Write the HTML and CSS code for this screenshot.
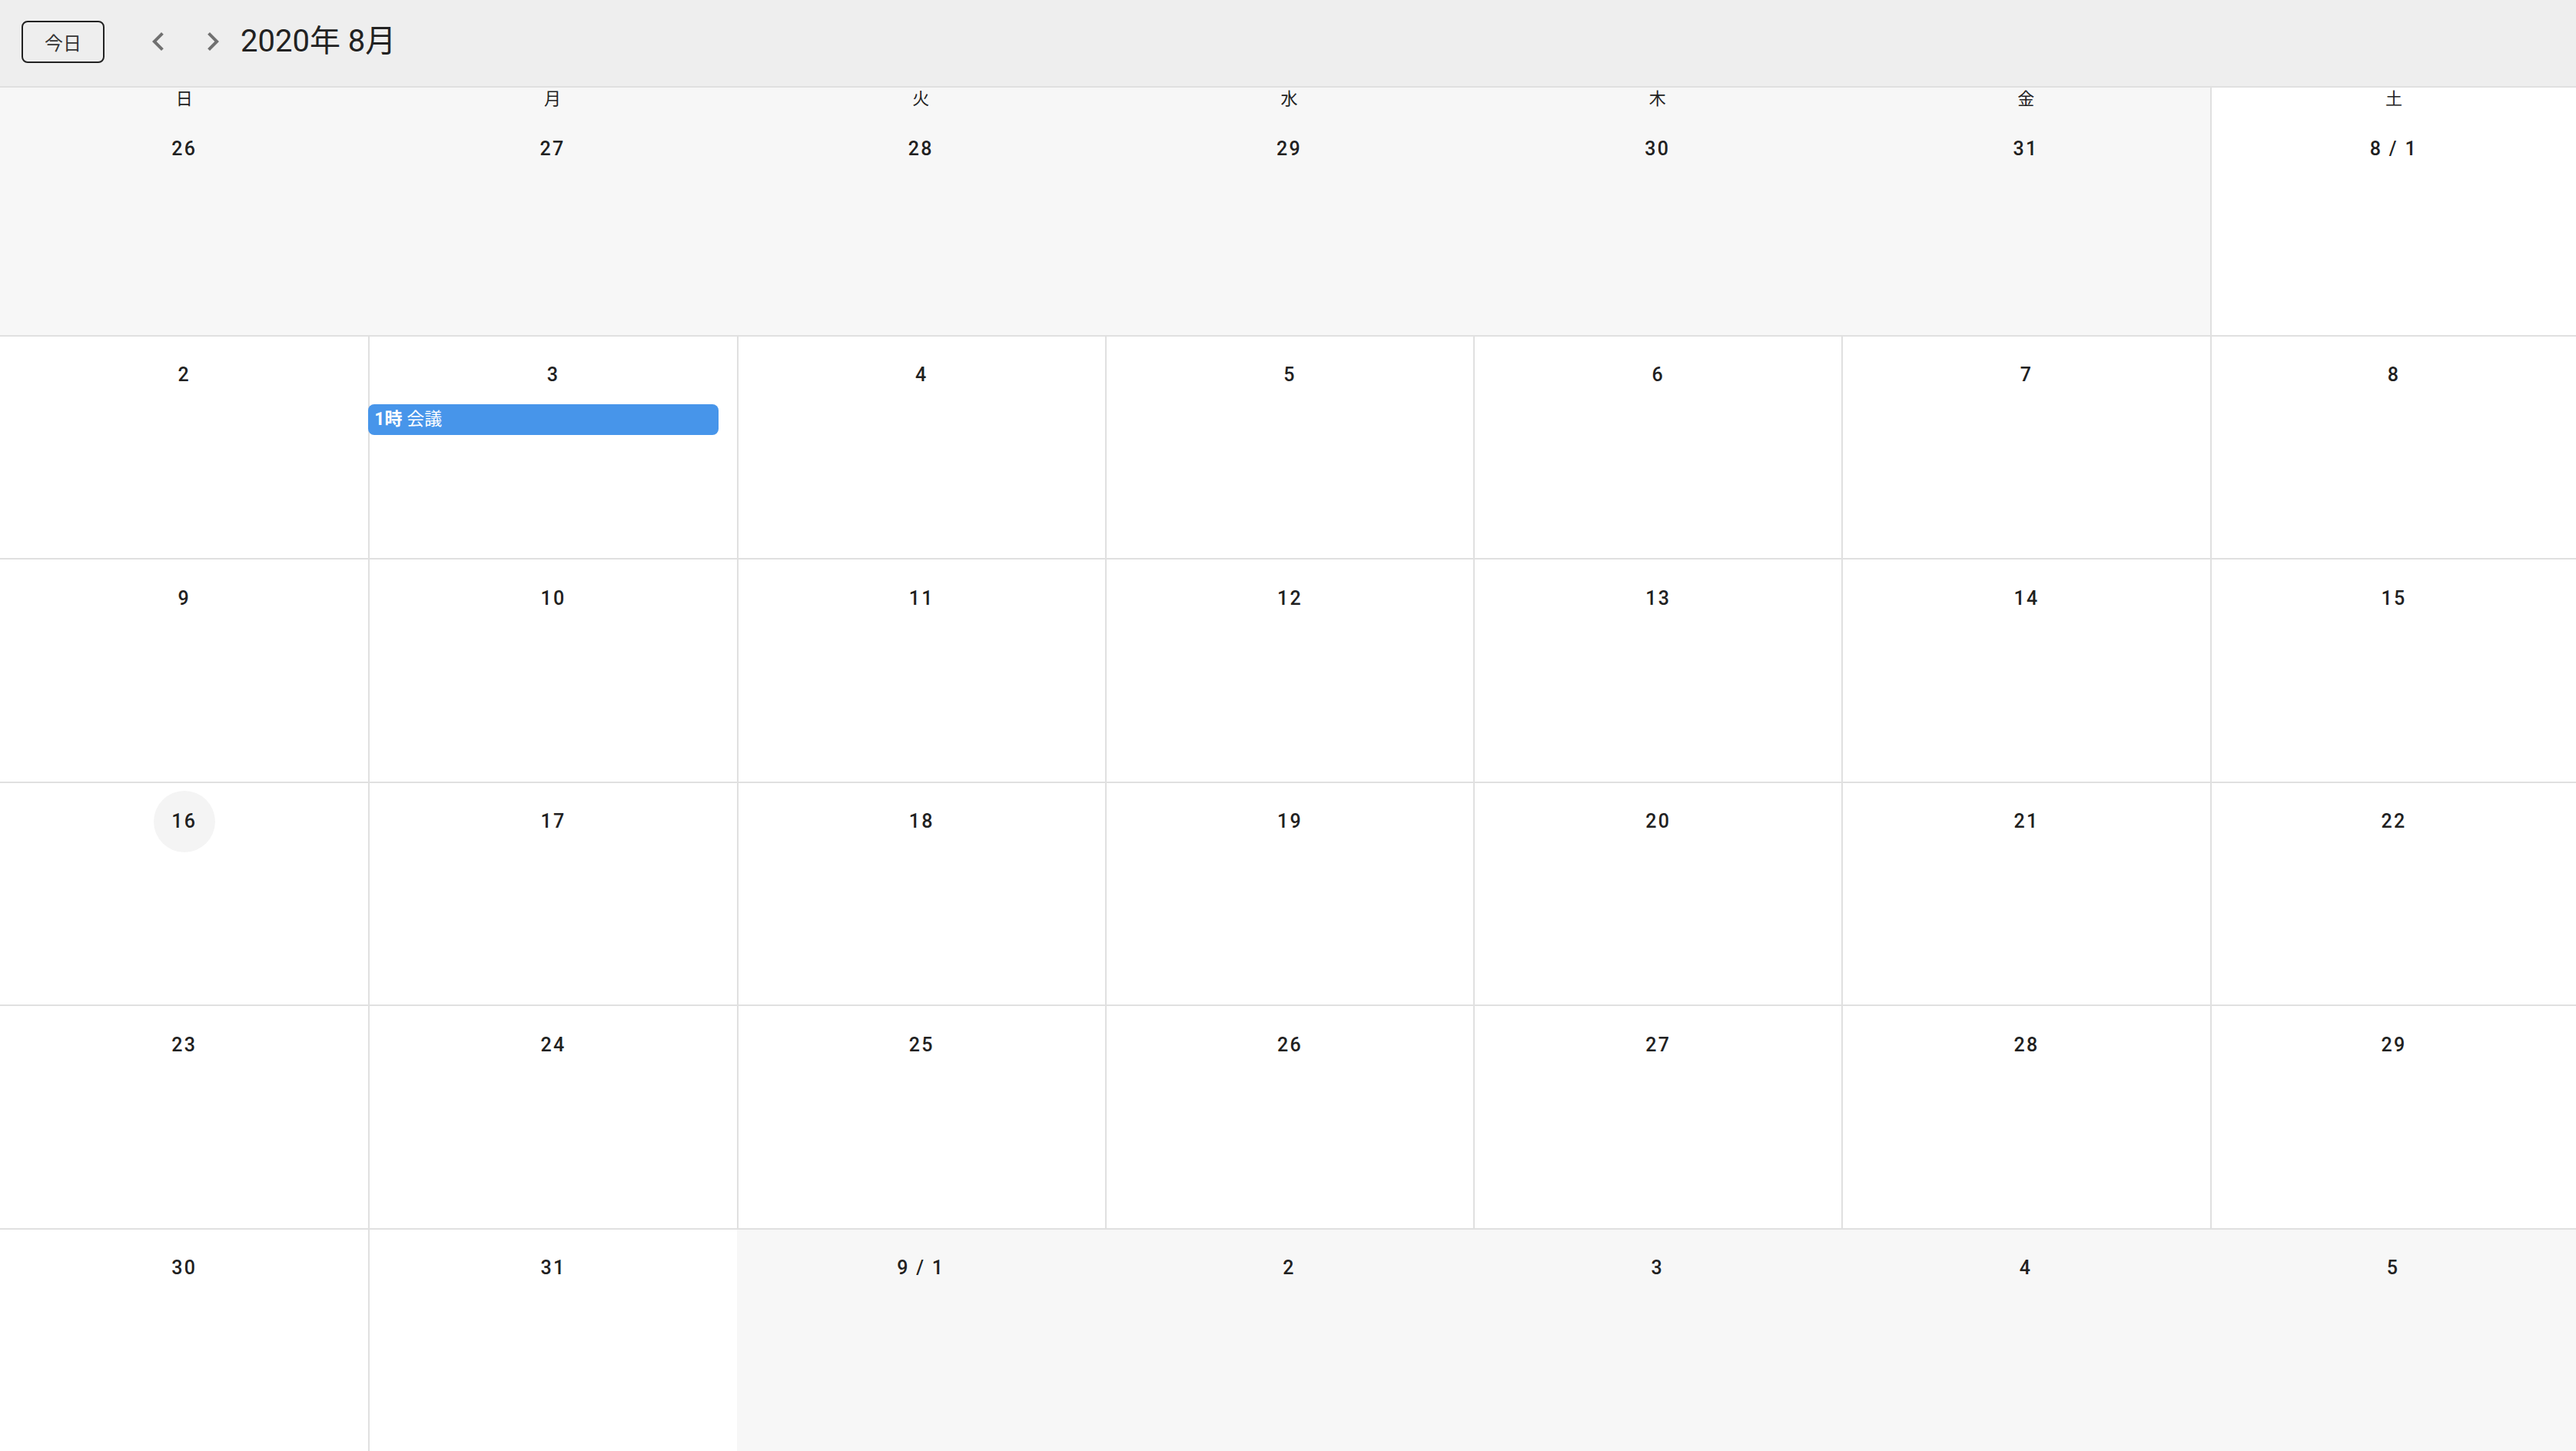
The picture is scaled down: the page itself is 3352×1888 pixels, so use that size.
FILE: index.html
```html
<!DOCTYPE html>
<html lang="ja">
<head>
<meta charset="utf-8">
<title>カレンダー</title>
<link rel="stylesheet" href="styles.css">
</head>
<body>
<div class="app">
  <header class="toolbar">
    <button class="today-btn">今日</button>
    <button class="icon-btn" aria-label="前へ">
      <svg viewBox="0 0 24 24" width="48" height="48"><path d="M15.41,16.58L10.83,12L15.41,7.41L14,6L8,12L14,18L15.41,16.58Z"/></svg>
    </button>
    <button class="icon-btn" aria-label="次へ">
      <svg viewBox="0 0 24 24" width="48" height="48"><path d="M8.59,16.58L13.17,12L8.59,7.41L10,6L16,12L10,18L8.59,16.58Z"/></svg>
    </button>
    <div class="title">2020年 8月</div>
  </header>

  <main class="month">
    <div class="week first">
      <div class="day out"><div class="wd">日</div><div class="num">26</div></div>
      <div class="day out"><div class="wd">月</div><div class="num">27</div></div>
      <div class="day out"><div class="wd">火</div><div class="num">28</div></div>
      <div class="day out"><div class="wd">水</div><div class="num">29</div></div>
      <div class="day out"><div class="wd">木</div><div class="num">30</div></div>
      <div class="day out"><div class="wd">金</div><div class="num">31</div></div>
      <div class="day in"><div class="wd">土</div><div class="num">8 / 1</div></div>
    </div>
    <div class="week">
      <div class="day in"><div class="num">2</div></div>
      <div class="day in"><div class="num">3</div><div class="event"><span class="ev-time">1時</span> 会議</div></div>
      <div class="day in"><div class="num">4</div></div>
      <div class="day in"><div class="num">5</div></div>
      <div class="day in"><div class="num">6</div></div>
      <div class="day in"><div class="num">7</div></div>
      <div class="day in"><div class="num">8</div></div>
    </div>
    <div class="week">
      <div class="day in"><div class="num">9</div></div>
      <div class="day in"><div class="num">10</div></div>
      <div class="day in"><div class="num">11</div></div>
      <div class="day in"><div class="num">12</div></div>
      <div class="day in"><div class="num">13</div></div>
      <div class="day in"><div class="num">14</div></div>
      <div class="day in"><div class="num">15</div></div>
    </div>
    <div class="week">
      <div class="day in"><div class="num today">16</div></div>
      <div class="day in"><div class="num">17</div></div>
      <div class="day in"><div class="num">18</div></div>
      <div class="day in"><div class="num">19</div></div>
      <div class="day in"><div class="num">20</div></div>
      <div class="day in"><div class="num">21</div></div>
      <div class="day in"><div class="num">22</div></div>
    </div>
    <div class="week">
      <div class="day in"><div class="num">23</div></div>
      <div class="day in"><div class="num">24</div></div>
      <div class="day in"><div class="num">25</div></div>
      <div class="day in"><div class="num">26</div></div>
      <div class="day in"><div class="num">27</div></div>
      <div class="day in"><div class="num">28</div></div>
      <div class="day in"><div class="num">29</div></div>
    </div>
    <div class="week">
      <div class="day in"><div class="num">30</div></div>
      <div class="day in"><div class="num">31</div></div>
      <div class="day out"><div class="num">9 / 1</div></div>
      <div class="day out"><div class="num">2</div></div>
      <div class="day out"><div class="num">3</div></div>
      <div class="day out"><div class="num">4</div></div>
      <div class="day out"><div class="num">5</div></div>
    </div>
  </main>
</div>
</body>
</html>
```

FILE: styles.css
```css
html, body {
  margin: 0;
  padding: 0;
  height: 100%;
  background: #ffffff;
  font-family: Roboto, "Noto Sans CJK JP", sans-serif;
  color: #212121;
}

.app {
  display: flex;
  flex-direction: column;
  height: 100vh;
  overflow: hidden;
}

.toolbar {
  flex: 0 0 auto;
  height: 108px;
  padding-bottom: 4px;
  background: #eeeeee;
  border-bottom: 2px solid #e0e0e0;
  display: flex;
  align-items: center;
  padding-left: 28px;
  box-sizing: content-box;
}

.today-btn {
  width: 108px;
  height: 55px;
  border: 2px solid #222222;
  border-radius: 8px;
  background: transparent;
  font-family: "Noto Sans CJK JP", sans-serif;
  font-size: 24px;
  color: #333333;
  padding: 0;
  display: flex;
  align-items: center;
  justify-content: center;
  box-sizing: border-box;
}

.icon-btn {
  width: 71px;
  height: 72px;
  margin: 0;
  padding: 0;
  border: 0;
  background: transparent;
  display: flex;
  align-items: center;
  justify-content: center;
  fill: #707070;
}

.today-btn + .icon-btn {
  margin-left: 34px;
}

.title {
  font-family: Roboto, "Noto Sans CJK JP", sans-serif;
  font-size: 40px;
  font-weight: 400;
  color: #222222;
  margin-left: 1px;
  line-height: 1;
}

.month {
  flex: 1 1 auto;
  display: flex;
  flex-direction: column;
  min-height: 0;
}

.week {
  flex: 1 0 0;
  display: grid;
  grid-template-columns: repeat(6, 479.3px) 1fr;
  min-height: 0;
}

.week.first {
  flex-basis: 33px;
}

.week + .week {
  border-top: 2px solid #e0e0e0;
}

.day {
  display: flex;
  flex-direction: column;
  align-items: center;
  min-width: 0;
  background: #ffffff;
}

.day.out {
  background: #f7f7f7;
}

.day.in:not(:first-child) {
  border-left: 2px solid #e0e0e0;
}

.wd {
  height: 29px;
  line-height: 24px;
  font-family: "Noto Sans CJK JP", sans-serif;
  font-size: 22px;
  color: #222222;
}

.num {
  width: 80px;
  height: 80px;
  margin-top: 10px;
  border-radius: 50%;
  display: flex;
  align-items: center;
  justify-content: center;
  font-family: Roboto, sans-serif;
  font-size: 25px;
  font-weight: 500;
  letter-spacing: 2.3px;
  white-space: nowrap;
  color: #212121;
}

.num.today {
  background: #f4f4f4;
}

.event {
  align-self: flex-start;
  margin-top: -2px;
  margin-left: -2px;
  width: calc(100% - 22px);
  height: 40px;
  line-height: 40px;
  border-radius: 8px;
  background: #4795ea;
  color: #ffffff;
  font-family: Roboto, "Noto Sans CJK JP", sans-serif;
  font-size: 23px;
  padding-left: 8px;
  box-sizing: border-box;
  white-space: nowrap;
  overflow: hidden;
}

.ev-time {
  font-weight: 700;
}
```
